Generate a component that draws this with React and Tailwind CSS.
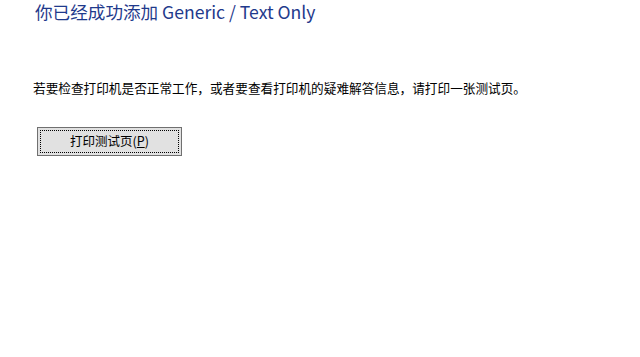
export default function App() {
  return (
    <div className="h-[357px] w-[640px] bg-white" style={{ fontFamily: '"Noto Sans CJK SC", "Noto Sans", sans-serif' }}>
      <div className="pl-[35px]">
        <h1 className="text-[17.6px] leading-[24px] font-normal text-[#1f3a8c]">你已经成功添加 Generic / Text Only</h1>
      </div>
      <p className="mt-[55px] pl-[33px] text-[12.65px] leading-[18px] text-black">
        若要检查打印机是否正常工作，或者要查看打印机的疑难解答信息，请打印一张测试页。
      </p>
      <div className="mt-[30px] pl-[37px]">
        <button className="flex h-[29px] w-[145px] items-center justify-center border border-[#707070] bg-[#e1e1e1] p-[2px]">
          <span className="flex h-full w-full items-center justify-center border border-dotted border-black text-[12.5px] text-black">
            打印测试页(<span className="underline">P</span>)
          </span>
        </button>
      </div>
    </div>
  );
}
